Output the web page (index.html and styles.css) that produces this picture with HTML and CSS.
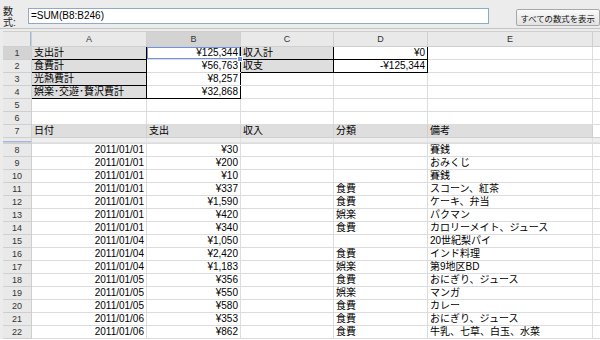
FILE: index.html
```html
<!DOCTYPE html>
<html>

<head>
  <title>家計簿 - スプレッドシート</title>
  <link rel="stylesheet" href="styles.css">
</head>

<body>
  <div class="toolbar">
    <div class="fxlabel">数<br>式:</div>
    <div class="fxinput">=SUM(B8:B246)</div>
    <button class="fxbtn">すべての数式を表示</button>
  </div>
  <div class="toolgap"></div>
  <table class="sheet">
    <colgroup>
      <col class="w-rh">
      <col class="w-a">
      <col class="w-b">
      <col class="w-c">
      <col class="w-d">
      <col class="w-e">
      <col class="w-f">
    </colgroup>
    <tr class="hdr">
      <th class="corner"></th>
      <th class="ch">A</th>
      <th class="ch sel">B</th>
      <th class="ch">C</th>
      <th class="ch">D</th>
      <th class="ch">E</th>
      <th class="ch"></th>
    </tr>
    <tr>
      <th class="rh sel">1</th>
      <td class="lbl">支出計</td>
      <td class="num bx-r cur">¥125,344<span class="handle"></span></td>
      <td class="lbl">収入計</td>
      <td class="num bx-r bx-b">¥0</td>
      <td></td><td></td>
    </tr>
    <tr>
      <th class="rh">2</th>
      <td class="lbl">食費計</td>
      <td class="num bx-r">¥56,763</td>
      <td class="lbl">収支</td>
      <td class="num bx-r bx-b">-¥125,344</td>
      <td></td><td></td>
    </tr>
    <tr>
      <th class="rh">3</th>
      <td class="lbl">光熱費計</td>
      <td class="num bx-r">¥8,257</td>
      <td></td><td></td><td></td><td></td>
    </tr>
    <tr>
      <th class="rh">4</th>
      <td class="lbl">娯楽･交遊･贅沢費計</td>
      <td class="num bx-r bx-b">¥32,868</td>
      <td></td><td></td><td></td><td></td>
    </tr>
    <tr>
      <th class="rh">5</th>
      <td></td><td></td><td></td><td></td><td></td><td></td>
    </tr>
    <tr>
      <th class="rh">6</th>
      <td></td><td></td><td></td><td></td><td></td><td></td>
    </tr>
    <tr class="colnames">
      <th class="rh">7</th>
      <td>日付</td><td>支出</td><td>収入</td><td>分類</td><td>備考</td><td class="blank"></td>
    </tr>
    <tr class="freeze">
      <th class="rh"></th>
      <td></td><td></td><td></td><td></td><td></td><td></td>
    </tr>
  </table>
  <table class="sheet" id="rows">
    <colgroup>
      <col class="w-rh">
      <col class="w-a">
      <col class="w-b">
      <col class="w-c">
      <col class="w-d">
      <col class="w-e">
      <col class="w-f">
    </colgroup>
  </table>
  <script src="rows.js"></script>
</body>

</html>
```

FILE: rows.js
```js
var data = [
  ['2011/01/01', '¥30', '', '賽銭'],
  ['2011/01/01', '¥200', '', 'おみくじ'],
  ['2011/01/01', '¥10', '', '賽銭'],
  ['2011/01/01', '¥337', '食費', 'スコーン、紅茶'],
  ['2011/01/01', '¥1,590', '食費', 'ケーキ、弁当'],
  ['2011/01/01', '¥420', '娯楽', 'パクマン'],
  ['2011/01/01', '¥340', '食費', 'カロリーメイト、ジュース'],
  ['2011/01/04', '¥1,050', '', '20世紀梨パイ'],
  ['2011/01/04', '¥2,420', '食費', 'インド料理'],
  ['2011/01/04', '¥1,183', '娯楽', '第9地区BD'],
  ['2011/01/05', '¥356', '食費', 'おにぎり、ジュース'],
  ['2011/01/05', '¥550', '娯楽', 'マンガ'],
  ['2011/01/05', '¥580', '食費', 'カレー'],
  ['2011/01/06', '¥353', '食費', 'おにぎり、ジュース'],
  ['2011/01/06', '¥862', '食費', '牛乳、七草、白玉、水菜']
];

var table = document.getElementById('rows');

data.forEach(function (row, i) {
  var tr = document.createElement('tr');
  var th = document.createElement('th');
  th.className = 'rh';
  th.textContent = i + 8;
  tr.appendChild(th);

  var cells = [row[0], row[1], '', row[2], row[3], ''];
  cells.forEach(function (text, j) {
    var td = document.createElement('td');
    if (j < 2) td.className = 'num';
    td.textContent = text;
    tr.appendChild(td);
  });
  table.appendChild(tr);
});
```

FILE: styles.css
```css
body {
  margin: 0;
  overflow: hidden;
  background: #fff;
  font-family: "Liberation Sans", "Noto Sans CJK JP", sans-serif;
  font-size: 10px;
  color: #000;
}

.toolbar {
  display: flex;
  align-items: flex-start;
  height: 28px;
  background: #ececec;
  border-bottom: 1px solid #c4c4c4;
}

.fxlabel {
  width: 24px;
  padding: 6px 0 0 3px;
  line-height: 11px;
  color: #222;
}

.fxinput {
  width: 458px;
  height: 14px;
  line-height: 14px;
  margin-top: 8px;
  padding: 0 2px;
  margin-left: 1px;
  background: #fff;
  border: 1px solid #8fa9c9;
}

.fxbtn {
  margin: 9px 0 0 27px;
  height: 17px;
  width: 84px;
  padding: 0 0 0 3px;
  text-align: left;
  font-family: inherit;
  font-size: 8.4px;
  color: #111;
  background: linear-gradient(#fafafa, #e2e2e2);
  border: 1px solid #a8a8a8;
  border-radius: 2px;
  white-space: nowrap;
}

.toolgap {
  height: 2px;
  background: #ececec;
}

.sheet {
  border-collapse: collapse;
  table-layout: fixed;
  width: 660px;
}

.w-rh { width: 30px; }
.w-a { width: 115px; }
.w-b { width: 94px; }
.w-c { width: 93px; }
.w-d { width: 94px; }
.w-e { width: 165px; }
.w-f { width: 69px; }

.sheet td,
.sheet th {
  height: 12px;
  padding: 0 2px;
  line-height: 12px;
  white-space: nowrap;
  overflow: hidden;
  border: 1px solid #dcdcdc;
  font-weight: normal;
  text-align: left;
}

.sheet .hdr th {
  height: 14px;
  line-height: 14px;
  background: #e9e9e9;
  border-color: #cfcfcf;
  color: #333;
  text-align: center;
  font-size: 9px;
}

.sheet .hdr .corner {
  border-left: 3px solid #ececec;
  box-shadow: inset -2px 0 0 -1px #9fb7e6;
}

.sheet .hdr .sel,
.sheet .rh.sel {
  background: #d3d3d3;
}

.sheet .rh {
  background: #e9e9e9;
  border-color: #cfcfcf;
  border-left: 3px solid #ececec;
  color: #333;
  text-align: center;
  font-size: 9px;
}

.sheet td.num {
  text-align: right;
}

.sheet td.lbl {
  background: #dedede;
  border: 1px solid #000;
}

.sheet td.bx-r {
  border-right: 1px solid #000;
}

.sheet td.bx-b {
  border-bottom: 1px solid #000;
}

.sheet td.cur {
  position: relative;
  overflow: visible;
  box-shadow: inset 0 0 0 1px #6f93dd;
}

.handle {
  position: absolute;
  right: -3px;
  bottom: -3px;
  width: 4px;
  height: 4px;
  background: #6f93dd;
  border: 1px solid #fff;
}

.colnames td {
  background: #dedede;
  border-color: #d0d0d0;
}

.colnames td.blank {
  background: #fff;
}

.freeze th,
.freeze td {
  height: 4px;
  line-height: 4px;
  background: #efefef;
  border-color: #e2e2e2;
}

.freeze th.rh {
  background: #e9e9e9;
  box-shadow: inset 0 -1px 0 #9fb7e6;
}
```
